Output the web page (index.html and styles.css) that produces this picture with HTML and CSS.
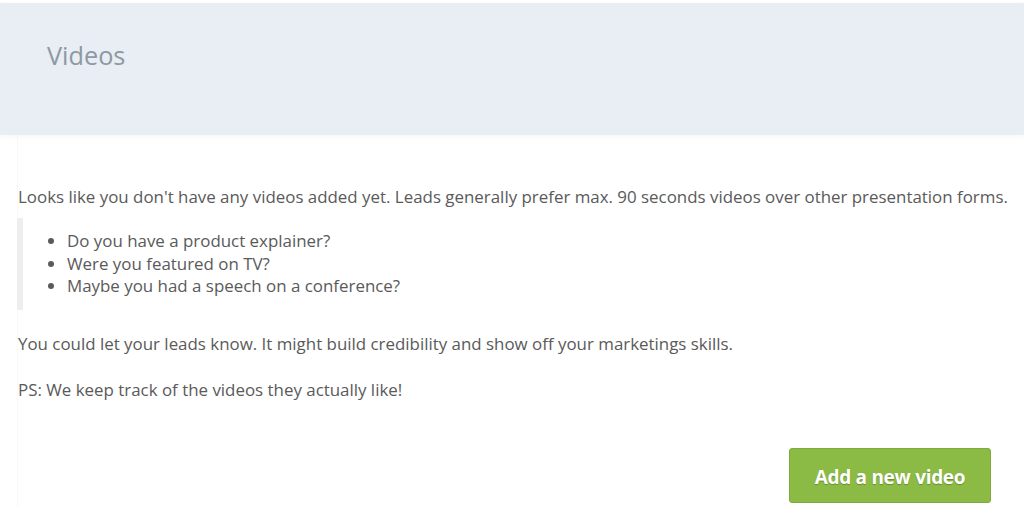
FILE: index.html
```html
<!DOCTYPE html>
<html lang="en">
<head>
<meta charset="utf-8">
<title>Videos</title>
<link rel="stylesheet" href="styles.css">
</head>
<body>
<div class="page">
  <header class="hero">
    <h1 class="hero-title">Videos</h1>
  </header>
  <main class="card">
    <p class="lead-text">Looks like you don't have any videos added yet. Leads generally prefer max. 90 seconds videos over other presentation forms.</p>
    <blockquote class="quote">
      <ul class="ideas">
        <li>Do you have a product explainer?</li>
        <li>Were you featured on TV?</li>
        <li>Maybe you had a speech on a conference?</li>
      </ul>
    </blockquote>
    <p class="text">You could let your leads know. It might build credibility and show off your marketings skills.</p>
    <p class="text">PS: We keep track of the videos they actually like!</p>
    <div class="actions">
      <button class="btn-add" type="button">Add a new video</button>
    </div>
  </main>
</div>
</body>
</html>
```

FILE: styles.css
```css
html, body {
  margin: 0;
  padding: 0;
  background: #ffffff;
}

body {
  font-family: "Open Sans", "DejaVu Sans", sans-serif;
  color: #5a5a5a;
  font-size: 16.9px;
  line-height: 23px;
}

.page {
  padding-top: 3px;
}

.hero {
  background: #e9edf4;
  height: 132px;
  box-shadow: 0 2px 6px rgba(0, 0, 0, 0.035);
  position: relative;
  z-index: 1;
}

.hero-title {
  margin: 0;
  padding: 37px 0 0 47px;
  font-size: 25.3px;
  line-height: 30px;
  font-weight: 400;
  color: #8e99a3;
}

.card {
  margin-left: 17px;
  padding: 50px 0 4px 0;
  border-left: 1px solid #f9f9f9;
}

.lead-text {
  margin: 0;
  white-space: nowrap;
}

.quote {
  margin: 10px 0 0 -1px;
  padding: 12px 0 12px 0;
  border-left: 6px solid #eeeeee;
}

.ideas {
  margin: 0;
  padding-left: 44px;
}

.ideas li {
  line-height: 22.5px;
}

.text {
  margin: 22px 0 0 0;
}

.text + .text {
  margin-top: 23px;
}

.actions {
  display: flex;
  justify-content: flex-end;
  padding-right: 33px;
  margin-top: 47px;
}

.btn-add {
  width: 202px;
  height: 55px;
  background: #8bbb45;
  border: 1px solid #7eab3c;
  border-radius: 3px;
  color: #ffffff;
  font-family: "Open Sans", "DejaVu Sans", sans-serif;
  font-size: 19px;
  font-weight: 700;
  letter-spacing: -0.3px;
  text-shadow: 0 1px 1px rgba(0, 0, 0, 0.25);
  padding: 3px 0 0 0;
  cursor: pointer;
}
```
